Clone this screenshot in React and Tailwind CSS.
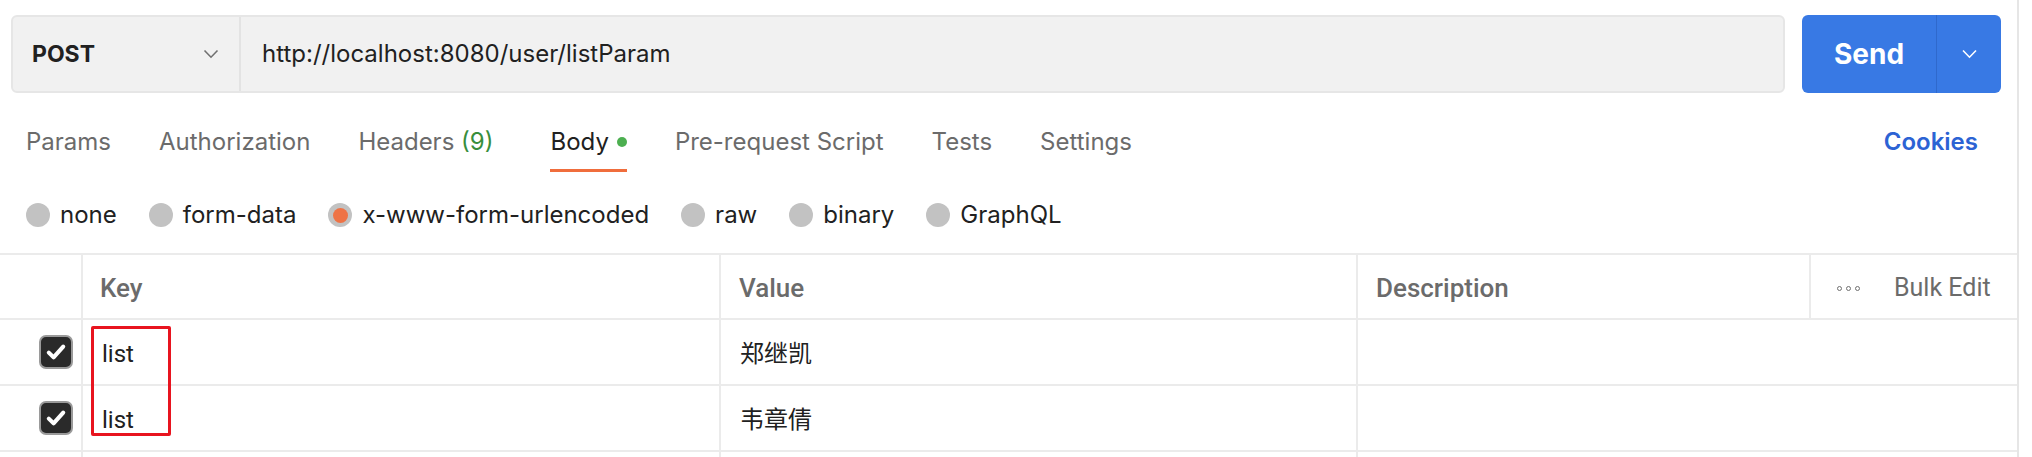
import React from 'react';

const tabs = [
  { label: 'Params' },
  { label: 'Authorization' },
  { label: 'Headers', count: '(9)' },
  { label: 'Body', active: true },
  { label: 'Pre-request Script' },
  { label: 'Tests' },
  { label: 'Settings' },
];

const bodyTypes = ['none', 'form-data', 'x-www-form-urlencoded', 'raw', 'binary', 'GraphQL'];

const rows = [
  { key: 'list', value: '郑继凯' },
  { key: 'list', value: '韦章倩' },
];

const Chevron = ({ className }) => (
  <svg viewBox="0 0 16 10" className={className} fill="none" stroke="currentColor" strokeWidth="1.6">
    <path d="M1.5 1.5 8 8.2l6.5-6.7" />
  </svg>
);

const Checkbox = () => (
  <div className="w-[34px] h-[34px] rounded-[7px] bg-[#2a2a2a] border-2 border-[#9a9a9a] flex items-center justify-center">
    <svg viewBox="0 0 20 20" className="w-[24px] h-[24px]" fill="none" stroke="#fff" strokeWidth="3.4" strokeLinecap="round" strokeLinejoin="round">
      <path d="M4 10.5l4 4 8-9" />
    </svg>
  </div>
);

const App = () => {
  return (
    <div className="relative w-[2032px] h-[457px] overflow-hidden bg-white flex font-['Inter','Noto_Sans',sans-serif]">
      <div className="w-[2019px] shrink-0 border-r-2 border-[#e6e6e6] flex flex-col">
        {/* Request bar */}
        <div className="flex gap-[17px] pl-[11px] pr-[16px] pt-[15px]">
          <div className="flex-1 h-[78px] flex bg-[#f1f1f1] border-2 border-[#e6e6e6] rounded-[6px]">
            <div className="w-[228px] flex items-center justify-between pl-[19px] pr-[20px] border-r-2 border-[#e3e3e3]">
              <span className="text-[23px] font-bold text-[#212121]">POST</span>
              <Chevron className="w-[16px] h-[10px] text-[#707070]" />
            </div>
            <div className="flex items-center pl-[21px] text-[24px] text-[#212121]">
              http://localhost:8080/user/listParam
            </div>
          </div>
          <div className="w-[199px] h-[78px] flex rounded-[6px] bg-[#3879e4] text-white">
            <div className="w-[135px] flex items-center justify-center text-[28px] font-bold border-r border-[#2f69cc]">
              Send
            </div>
            <div className="flex-1 flex items-center justify-center">
              <Chevron className="w-[17px] h-[10px] text-white" />
            </div>
          </div>
        </div>

        {/* Tabs */}
        <div className="flex items-start justify-between pl-[26px] pr-[39px] mt-[34px]">
          <div className="flex gap-[48px]">
            {tabs.map((t) => (
              <div key={t.label} className={`flex flex-col h-[45px] justify-between ${t.active ? 'ml-[9px]' : ''}`}>
                <div className={`flex items-center gap-[8px] text-[24px] leading-[30px] ${t.active ? 'text-[#212121]' : 'text-[#6b6b6b]'}`}>
                  <span>
                    {t.label}
                    {t.count && <span className="text-[#388e3c]"> {t.count}</span>}
                  </span>
                  {t.active && <span className="w-[10px] h-[10px] rounded-full bg-[#4caf50]" />}
                </div>
                {t.active && <div className="h-[3px] bg-[#f06d3c]" />}
              </div>
            ))}
          </div>
          <span className="text-[24px] leading-[30px] font-semibold text-[#2c63d4]">Cookies</span>
        </div>

        {/* Body types */}
        <div className="flex items-center gap-[32px] pl-[26px] mt-[28px] h-[30px]">
          {bodyTypes.map((b) => (
            <div key={b} className="flex items-center gap-[10px]">
              {b === 'x-www-form-urlencoded' ? (
                <span className="w-[24px] h-[24px] rounded-full bg-[#c2c2c2] flex items-center justify-center">
                  <span className="w-[15px] h-[15px] rounded-full bg-[#ee7346]" />
                </span>
              ) : (
                <span className="w-[24px] h-[24px] rounded-full bg-[#c2c2c2]" />
              )}
              <span className="text-[24px] text-[#212121]">{b}</span>
            </div>
          ))}
        </div>

        {/* Table */}
        <div className="mt-[23px] font-['Roboto','Noto_Sans_CJK_SC',sans-serif] text-[24px]">
          <div className="flex h-[67px] border-t-2 border-b-2 border-[#ebebeb] text-[26px] font-medium text-[#6b6b6b]">
            <div className="w-[83px] border-r-2 border-[#ebebeb]" />
            <div className="w-[638px] border-r-2 border-[#ebebeb] flex items-center pl-[17px] pt-[3px]">Key</div>
            <div className="w-[637px] border-r-2 border-[#ebebeb] flex items-center pl-[18px] pt-[3px]">Value</div>
            <div className="w-[453px] border-r-2 border-[#ebebeb] flex items-center pl-[18px] pt-[3px]">Description</div>
            <div className="flex-1 flex items-center pl-[26px] pt-[3px] gap-[34px] font-normal text-[25px]">
              <span className="flex gap-[4px]">
                <span className="w-[5px] h-[5px] rounded-full border border-[#707070]" />
                <span className="w-[5px] h-[5px] rounded-full border border-[#707070]" />
                <span className="w-[5px] h-[5px] rounded-full border border-[#707070]" />
              </span>
              <span>Bulk Edit</span>
            </div>
          </div>
          {rows.map((r, i) => (
            <div key={i} className="flex h-[66px] border-b-2 border-[#ebebeb] text-[#212121]">
              <div className="w-[83px] border-r-2 border-[#ebebeb] flex items-center pl-[39px]">
                <Checkbox />
              </div>
              <div className="w-[638px] border-r-2 border-[#ebebeb] flex items-center pl-[19px] pt-[3px]">{r.key}</div>
              <div className="w-[637px] border-r-2 border-[#ebebeb] flex items-center pl-[19px] pt-[3px]">{r.value}</div>
              <div className="flex-1" />
            </div>
          ))}
          <div className="flex h-[66px] border-b-2 border-[#ebebeb]">
            <div className="w-[83px] border-r-2 border-[#ebebeb]" />
            <div className="w-[638px] border-r-2 border-[#ebebeb]" />
            <div className="w-[637px] border-r-2 border-[#ebebeb]" />
            <div className="flex-1" />
          </div>
        </div>
      </div>

      {/* annotation box */}
      <div className="absolute left-[91px] top-[326px] w-[80px] h-[110px] border-[3px] border-[#e8141f] rounded-[2px]" />
    </div>
  );
};

export default App;
